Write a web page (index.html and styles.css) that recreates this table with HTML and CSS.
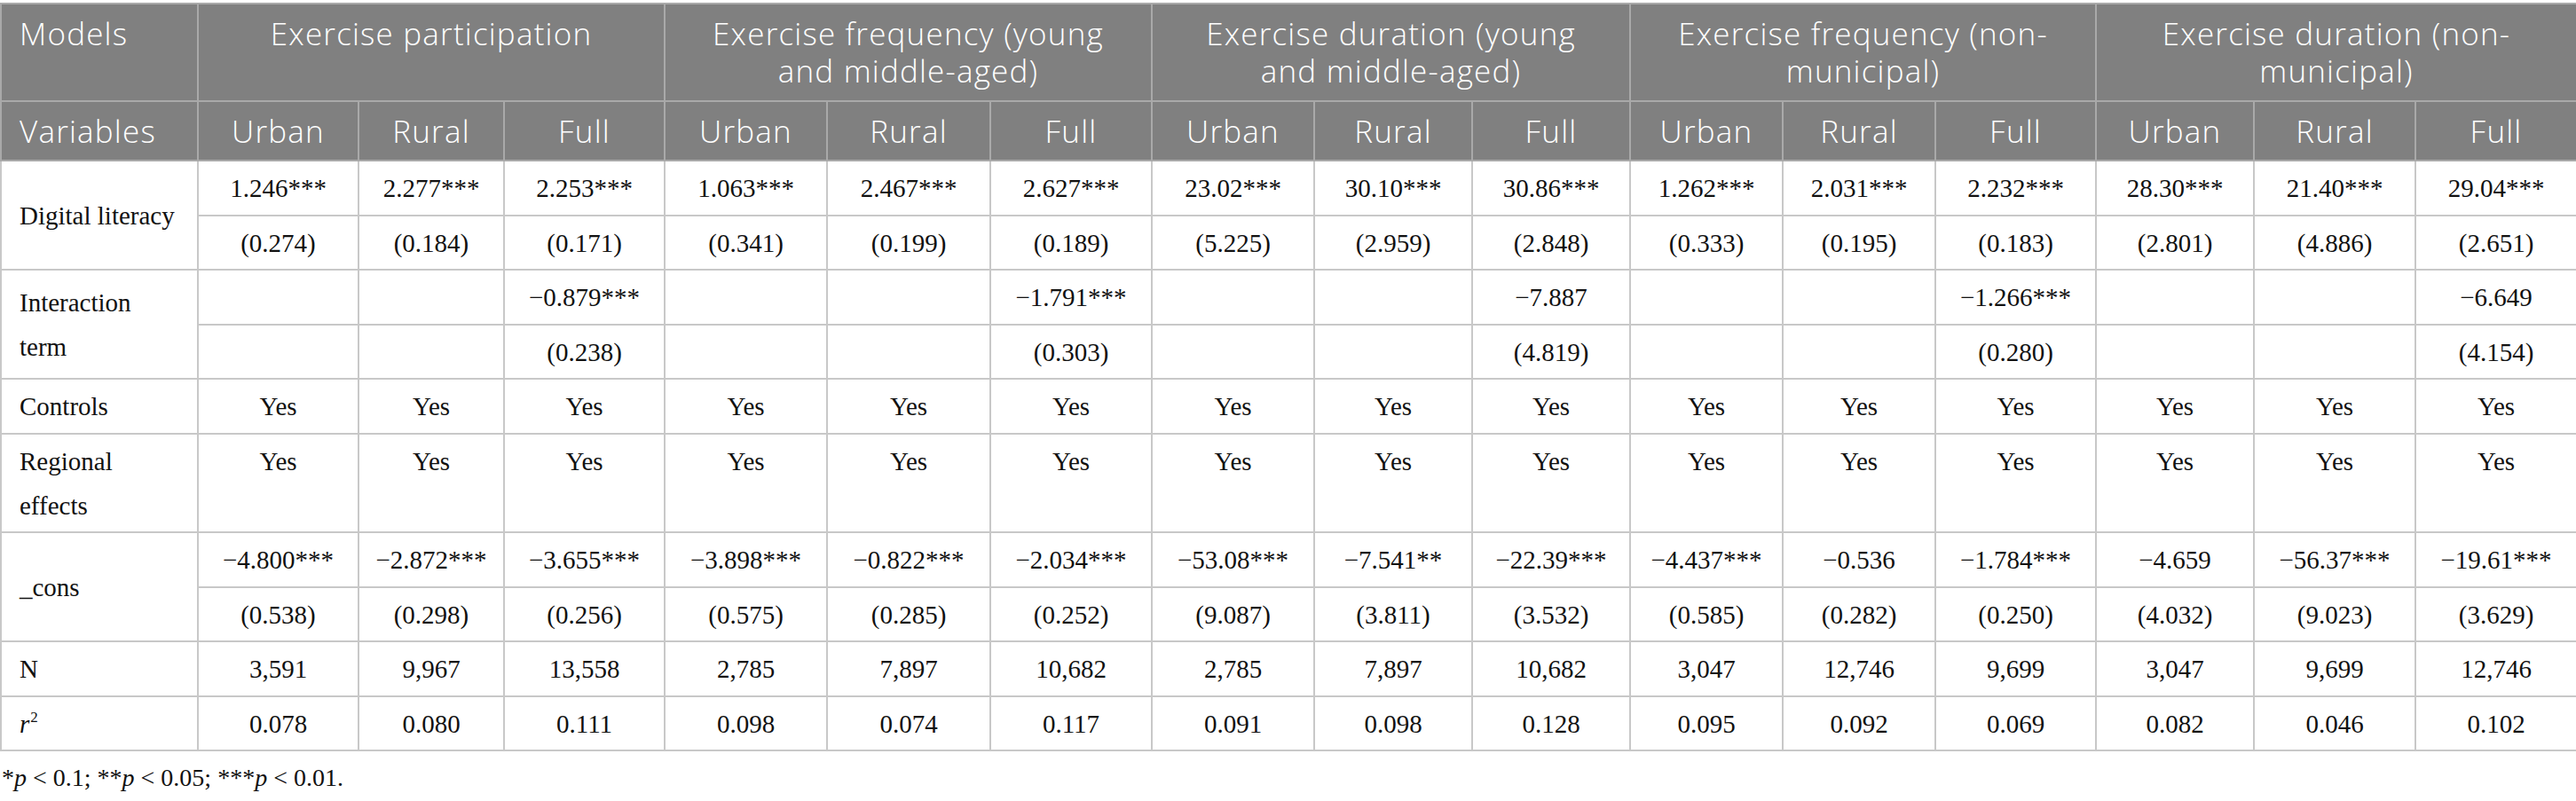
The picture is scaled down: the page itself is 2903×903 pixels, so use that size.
FILE: index.html
```html
<!DOCTYPE html>
<html lang="en">
<head>
<meta charset="utf-8">
<title>Regression results</title>
<link rel="stylesheet" href="styles.css">
</head>
<body>
<div class="wrap">
<table class="results">
  <colgroup>
    <col class="w222">
    <col class="w181"><col class="w164"><col class="w181">
    <col class="w183"><col class="w184"><col class="w182">
    <col class="w183"><col class="w178"><col class="w178">
    <col class="w172"><col class="w172"><col class="w181">
    <col class="w178"><col class="w182"><col class="w182">
  </colgroup>
  <thead>
    <tr class="hrow1">
      <th class="hl">Models</th>
      <th colspan="3">Exercise participation</th>
      <th colspan="3">Exercise frequency (young<br>and middle-aged)</th>
      <th colspan="3">Exercise duration (young<br>and middle-aged)</th>
      <th colspan="3">Exercise frequency (non-<br>municipal)</th>
      <th colspan="3">Exercise duration (non-<br>municipal)</th>
    </tr>
    <tr class="hrow2">
      <th class="hl">Variables</th>
      <th>Urban</th><th>Rural</th><th>Full</th>
      <th>Urban</th><th>Rural</th><th>Full</th>
      <th>Urban</th><th>Rural</th><th>Full</th>
      <th>Urban</th><th>Rural</th><th>Full</th>
      <th>Urban</th><th>Rural</th><th>Full</th>
    </tr>
  </thead>
  <tbody>
    <tr>
      <td class="label mid" rowspan="2">Digital literacy</td>
      <td>1.246***</td><td>2.277***</td><td>2.253***</td>
      <td>1.063***</td><td>2.467***</td><td>2.627***</td>
      <td>23.02***</td><td>30.10***</td><td>30.86***</td>
      <td>1.262***</td><td>2.031***</td><td>2.232***</td>
      <td>28.30***</td><td>21.40***</td><td>29.04***</td>
    </tr>
    <tr>
      <td>(0.274)</td><td>(0.184)</td><td>(0.171)</td>
      <td>(0.341)</td><td>(0.199)</td><td>(0.189)</td>
      <td>(5.225)</td><td>(2.959)</td><td>(2.848)</td>
      <td>(0.333)</td><td>(0.195)</td><td>(0.183)</td>
      <td>(2.801)</td><td>(4.886)</td><td>(2.651)</td>
    </tr>
    <tr>
      <td class="label mid" rowspan="2">Interaction term</td>
      <td></td><td></td><td>−0.879***</td>
      <td></td><td></td><td>−1.791***</td>
      <td></td><td></td><td>−7.887</td>
      <td></td><td></td><td>−1.266***</td>
      <td></td><td></td><td>−6.649</td>
    </tr>
    <tr>
      <td></td><td></td><td>(0.238)</td>
      <td></td><td></td><td>(0.303)</td>
      <td></td><td></td><td>(4.819)</td>
      <td></td><td></td><td>(0.280)</td>
      <td></td><td></td><td>(4.154)</td>
    </tr>
    <tr>
      <td class="label">Controls</td>
      <td>Yes</td><td>Yes</td><td>Yes</td>
      <td>Yes</td><td>Yes</td><td>Yes</td>
      <td>Yes</td><td>Yes</td><td>Yes</td>
      <td>Yes</td><td>Yes</td><td>Yes</td>
      <td>Yes</td><td>Yes</td><td>Yes</td>
    </tr>
    <tr>
      <td class="label">Regional effects</td>
      <td>Yes</td><td>Yes</td><td>Yes</td>
      <td>Yes</td><td>Yes</td><td>Yes</td>
      <td>Yes</td><td>Yes</td><td>Yes</td>
      <td>Yes</td><td>Yes</td><td>Yes</td>
      <td>Yes</td><td>Yes</td><td>Yes</td>
    </tr>
    <tr>
      <td class="label mid" rowspan="2">_cons</td>
      <td>−4.800***</td><td>−2.872***</td><td>−3.655***</td>
      <td>−3.898***</td><td>−0.822***</td><td>−2.034***</td>
      <td>−53.08***</td><td>−7.541**</td><td>−22.39***</td>
      <td>−4.437***</td><td>−0.536</td><td>−1.784***</td>
      <td>−4.659</td><td>−56.37***</td><td>−19.61***</td>
    </tr>
    <tr>
      <td>(0.538)</td><td>(0.298)</td><td>(0.256)</td>
      <td>(0.575)</td><td>(0.285)</td><td>(0.252)</td>
      <td>(9.087)</td><td>(3.811)</td><td>(3.532)</td>
      <td>(0.585)</td><td>(0.282)</td><td>(0.250)</td>
      <td>(4.032)</td><td>(9.023)</td><td>(3.629)</td>
    </tr>
    <tr>
      <td class="label">N</td>
      <td>3,591</td><td>9,967</td><td>13,558</td>
      <td>2,785</td><td>7,897</td><td>10,682</td>
      <td>2,785</td><td>7,897</td><td>10,682</td>
      <td>3,047</td><td>12,746</td><td>9,699</td>
      <td>3,047</td><td>9,699</td><td>12,746</td>
    </tr>
    <tr>
      <td class="label"><i>r</i><sup class="sq">2</sup></td>
      <td>0.078</td><td>0.080</td><td>0.111</td>
      <td>0.098</td><td>0.074</td><td>0.117</td>
      <td>0.091</td><td>0.098</td><td>0.128</td>
      <td>0.095</td><td>0.092</td><td>0.069</td>
      <td>0.082</td><td>0.046</td><td>0.102</td>
    </tr>
  </tbody>
</table>
<p class="note">*<i>p</i> &lt; 0.1; **<i>p</i> &lt; 0.05; ***<i>p</i> &lt; 0.01.</p>
</div>
</body>
</html>
```

FILE: styles.css
```css
html, body {
  margin: 0;
  padding: 0;
  background: #ffffff;
  overflow: hidden;
}

.wrap {
  padding-top: 3px;
}

.results {
  width: 2903px;
  table-layout: fixed;
  border-collapse: collapse;
  font-family: "Liberation Serif", "Times New Roman", serif;
  font-size: 29px;
  color: #111111;
}

.w222 { width: 222px; }
.w181 { width: 181px; }
.w164 { width: 164px; }
.w183 { width: 183px; }
.w184 { width: 184px; }
.w182 { width: 182px; }
.w178 { width: 178px; }
.w172 { width: 172px; }

.results th {
  background: #808080;
  color: #ffffff;
  font-family: "Open Sans", "Noto Sans", sans-serif;
  font-weight: 300;
  font-size: 35px;
  letter-spacing: 1.2px;
  line-height: 42px;
  text-align: center;
  vertical-align: top;
  border: 2px solid #a9a9a9;
  padding: 12px 8px 12px;
}

.results .hrow2 th {
  padding: 12px 8px 11px;
}

.results th.hl {
  text-align: left;
  padding-left: 20px;
}

.results td {
  border: 2px solid #c8c8c8;
  line-height: 50px;
  text-align: center;
  vertical-align: top;
  padding: 5px 8px 4.5px;
}

.results td.label {
  text-align: left;
  padding-left: 20px;
  padding-right: 16px;
}

.results td.mid {
  vertical-align: middle;
}

.sq {
  font-size: 17px;
  line-height: 0;
  vertical-align: 12px;
  margin-left: 1px;
}

.note {
  margin: 12px 0 0 2px;
  font-family: "Liberation Serif", "Times New Roman", serif;
  font-size: 28px;
  line-height: 36px;
  color: #111111;
}
```
